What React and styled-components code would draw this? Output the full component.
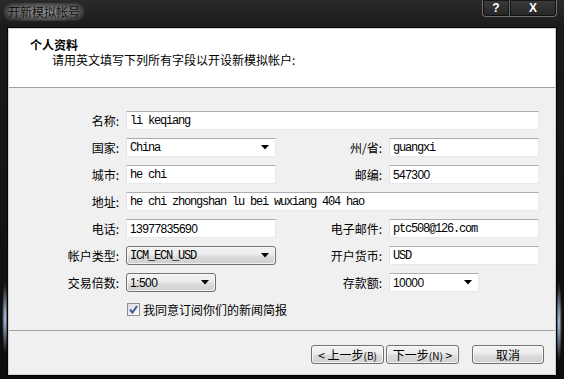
import React from 'react';
import styled, { createGlobalStyle } from 'styled-components';

const GlobalStyle = createGlobalStyle`
  html, body {
    margin: 0;
    padding: 0;
    background: #000;
  }
  body {
    width: 564px;
    height: 379px;
    overflow: hidden;
  }
`;

const Window = styled.div`
  width: 564px;
  height: 379px;
  box-sizing: border-box;
  display: flex;
  flex-direction: column;
  font-family: "Noto Sans CJK SC", sans-serif;
  font-size: 12px;
  color: #000;
  background:
    radial-gradient(ellipse 3px 36px at 5px 318px, rgba(190, 215, 250, 0.95), rgba(120, 160, 220, 0) 100%),
    radial-gradient(ellipse 3px 40px at 559px 322px, rgba(190, 215, 250, 0.95), rgba(120, 160, 220, 0) 100%),
    linear-gradient(180deg, #2a2a2a 0%, #1a1a1a 28px, #0c0c0c 100%);
`;

const TitleBar = styled.div`
  height: 28px;
  flex-shrink: 0;
  display: flex;
  justify-content: space-between;
  align-items: flex-start;
`;

const Title = styled.div`
  margin: 3px 0 0 4px;
  padding: 1px 4px;
  font-size: 12px;
  line-height: 16px;
  color: #111;
  border-radius: 8px;
  background: radial-gradient(ellipse at center, rgba(150, 150, 150, 0.75) 0%, rgba(110, 110, 110, 0.45) 60%, rgba(80, 80, 80, 0) 100%);
  text-shadow: 0 0 4px rgba(190, 190, 190, 0.9);
`;

const Caption = styled.div`
  display: flex;
  margin-right: 7px;
`;

const CaptionButton = styled.div`
  width: ${({ $w }) => $w}px;
  height: 17px;
  box-sizing: border-box;
  display: flex;
  align-items: center;
  justify-content: center;
  border: 1px solid #6e6e6e;
  border-top: none;
  border-radius: ${({ $first }) => ($first ? '0 0 0 4px' : '0 0 4px 0')};
  ${({ $first }) => ($first ? '' : 'border-left: none;')}
  background: linear-gradient(180deg, #3a3a3a 0%, #262626 100%);
  box-shadow: inset 0 0 0 1px rgba(0, 0, 0, 0.6);
  color: #fff;
  font-family: "Liberation Sans", sans-serif;
  font-weight: bold;
  font-size: 12px;
`;

const Client = styled.div`
  margin: 0 8px 4px 8px;
  flex: 1;
  display: flex;
  flex-direction: column;
  border: 1px solid #cfcfcf;
  box-shadow: 0 0 0 1px #050505;
  background: #f0f0f0;
`;

const Header = styled.div`
  height: 59px;
  box-sizing: border-box;
  background: #fff;
  border-bottom: 1px solid #a0a0a0;
  padding: 8px 0 0 21px;
  line-height: 15px;
`;

const HeaderTitle = styled.div`
  font-weight: bold;
`;

const HeaderText = styled.div`
  padding-left: 22px;
`;

const Body = styled.div`
  height: 243px;
  box-sizing: border-box;
  border-bottom: 1px solid #a0a0a0;
  padding-top: 23px;
`;

const Form = styled.div`
  display: grid;
  grid-template-columns: 112px 150px 103px 150px;
  grid-auto-rows: 19px;
  column-gap: 5px;
  row-gap: 8px;
`;

const Label = styled.div`
  grid-column: ${({ $col }) => $col};
  display: flex;
  align-items: center;
  justify-content: flex-end;
  padding-right: 2px;
  white-space: nowrap;
`;

const Field = styled.div`
  grid-column: ${({ $col }) => $col};
  width: ${({ $w }) => ($w ? `${$w}px` : 'auto')};
  box-sizing: border-box;
  display: flex;
  align-items: center;
  padding: 0 3px;
  border: 1px solid;
  border-color: #abadb3 #e3e9ef #e3e9ef #e2e3ea;
  background: #fff;
  font-family: ${({ $sans }) =>
    $sans ? '"Liberation Sans", sans-serif' : '"Liberation Mono", monospace'};
  font-size: 12px;
  letter-spacing: ${({ $sans }) => ($sans ? '-0.55px' : '-1.2px')};
  white-space: nowrap;
`;

const Combo = styled(Field)`
  justify-content: space-between;
  padding-right: 6px;
  ${({ $button }) =>
    $button
      ? `
    border: 1px solid #707070;
    border-radius: 3px;
    background: linear-gradient(180deg, #f2f2f2 0%, #ebebeb 48%, #dddddd 52%, #cfcfcf 100%);
    box-shadow: inset 0 0 0 1px rgba(255, 255, 255, 0.7);
  `
      : ''}
`;

const CheckRow = styled.label`
  grid-column: 2 / span 3;
  display: flex;
  align-items: center;
  gap: 3px;
  padding-left: 1px;
`;

const CheckBox = styled.span`
  width: 13px;
  height: 13px;
  box-sizing: border-box;
  border: 1px solid #8e8f8f;
  background: linear-gradient(135deg, #dcdcdc 0%, #fbfbfb 100%);
  display: flex;
  align-items: center;
  justify-content: center;
`;

const Footer = styled.div`
  flex: 1;
  display: flex;
  justify-content: flex-end;
  align-items: flex-start;
  padding: 14px 11px 0 0;
`;

const Button = styled.button`
  width: ${({ $w }) => $w}px;
  height: 19px;
  margin-left: ${({ $gap }) => $gap}px;
  padding: 0;
  border: 1px solid #707070;
  border-radius: 3px;
  background: linear-gradient(180deg, #f2f2f2 0%, #ebebeb 48%, #dddddd 52%, #cfcfcf 100%);
  box-shadow: inset 0 0 0 1px rgba(255, 255, 255, 0.7);
  font-family: "Noto Sans CJK SC", sans-serif;
  font-size: 12px;
  line-height: 15px;
  color: #000;
`;

const Small = styled.span`
  font-size: 10px;
`;

const Arrow = () => (
  <svg width="8" height="5" viewBox="0 0 8 5">
    <path d="M0 0 H8 L4 4.5 Z" fill="#000" />
  </svg>
);

const Check = () => (
  <svg width="9" height="9" viewBox="0 0 9 9">
    <path d="M1 4.5 L3.5 7.5 L8 1" fill="none" stroke="#3c5aa0" strokeWidth="2" />
  </svg>
);

const App = () => (
  <>
    <GlobalStyle />
    <Window>
      <TitleBar>
        <Title>开新模拟帐号</Title>
        <Caption>
          <CaptionButton $w={28} $first>?</CaptionButton>
          <CaptionButton $w={47}>X</CaptionButton>
        </Caption>
      </TitleBar>
      <Client>
        <Header>
          <HeaderTitle>个人资料</HeaderTitle>
          <HeaderText>请用英文填写下列所有字段以开设新模拟帐户:</HeaderText>
        </Header>
        <Body>
          <Form>
            <Label $col="1">名称:</Label>
            <Field $col="2 / span 3">li keqiang</Field>

            <Label $col="1">国家:</Label>
            <Combo $col="2">China<Arrow /></Combo>
            <Label $col="3">州/省:</Label>
            <Field $col="4">guangxi</Field>

            <Label $col="1">城市:</Label>
            <Field $col="2">he chi</Field>
            <Label $col="3">邮编:</Label>
            <Field $col="4" $sans>547300</Field>

            <Label $col="1">地址:</Label>
            <Field $col="2 / span 3">he chi zhongshan lu bei wuxiang 404 hao</Field>

            <Label $col="1">电话:</Label>
            <Field $col="2" $sans>13977835690</Field>
            <Label $col="3">电子邮件:</Label>
            <Field $col="4">ptc508@126.com</Field>

            <Label $col="1">帐户类型:</Label>
            <Combo $col="2" $button>ICM_ECN_USD<Arrow /></Combo>
            <Label $col="3">开户货币:</Label>
            <Field $col="4">USD</Field>

            <Label $col="1">交易倍数:</Label>
            <Combo $col="2" $button $sans $w={90}>1:500<Arrow /></Combo>
            <Label $col="3">存款额:</Label>
            <Combo $col="4" $sans $w={90}>10000<Arrow /></Combo>

            <CheckRow>
              <CheckBox><Check /></CheckBox>
              我同意订阅你们的新闻简报
            </CheckRow>
          </Form>
        </Body>
        <Footer>
          <Button $w={73} $gap={0}>&lt; 上一步<Small>(B)</Small></Button>
          <Button $w={73} $gap={2}>下一步<Small>(N)</Small> &gt;</Button>
          <Button $w={72} $gap={13}>取消</Button>
        </Footer>
      </Client>
    </Window>
  </>
);

export default App;
